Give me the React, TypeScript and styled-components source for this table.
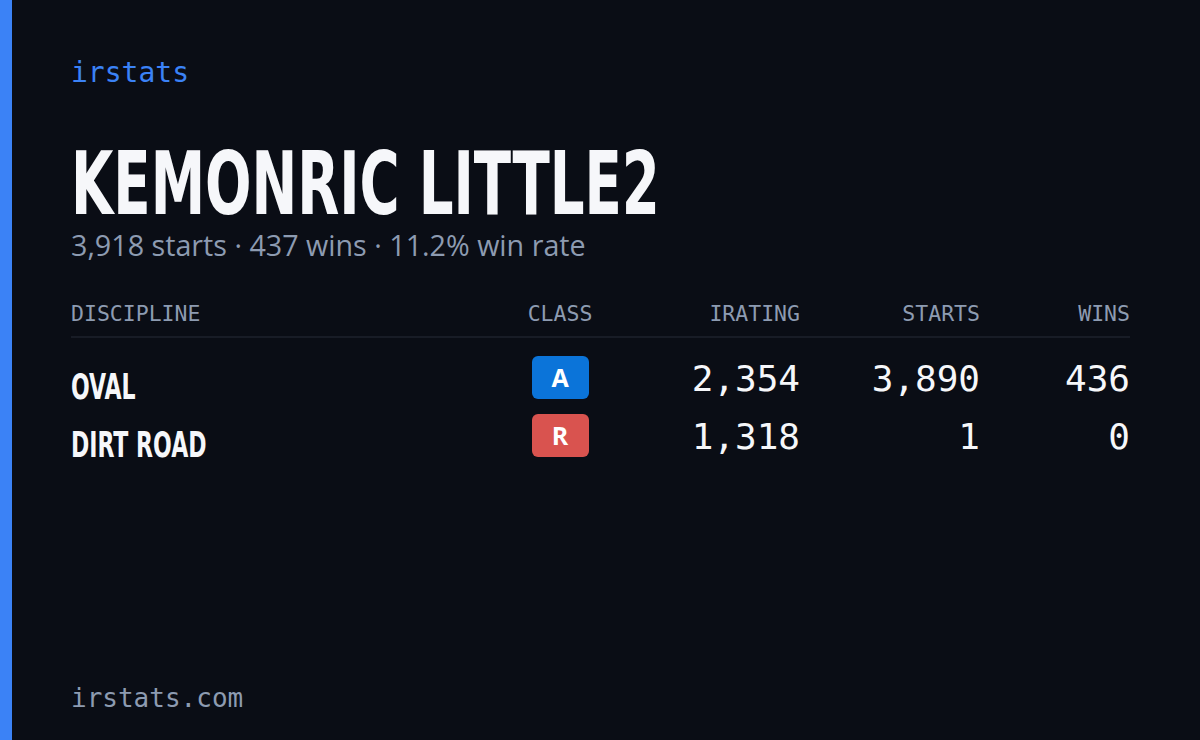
import React from 'react';
import styled, { createGlobalStyle } from 'styled-components';

const GlobalStyle = createGlobalStyle`
  html, body {
    margin: 0;
    padding: 0;
    background: #0a0d15;
  }
  #root {
    width: 1200px;
    height: 740px;
  }
`;

const MONO = `'DejaVu Sans Mono', 'Liberation Mono', monospace`;
const COND = `'DejaVu Sans Condensed', 'DejaVu Sans', sans-serif`;

const Card = styled.div`
  display: flex;
  width: 1200px;
  height: 740px;
  background: #0a0d15;
  overflow: hidden;
`;

const AccentBar = styled.div`
  width: 12px;
  flex-shrink: 0;
  background: #3b82f6;
`;

const Main = styled.div`
  flex: 1;
  display: flex;
  flex-direction: column;
  padding: 57px 70px 26px 59px;
`;

const Brand = styled.div`
  font-family: ${MONO};
  font-size: 28px;
  line-height: 32px;
  color: #3b82f6;
`;

const Title = styled.h1`
  margin: 55px 0 0;
  font-family: ${COND};
  font-weight: 700;
  font-size: 88px;
  line-height: 80px;
  color: #f6f7fa;
  white-space: nowrap;
  transform: scaleX(0.69);
  transform-origin: left center;
`;

const Subtitle = styled.div`
  margin-top: 4px;
  font-family: 'Open Sans', 'Noto Sans', sans-serif;
  font-size: 28.7px;
  line-height: 34px;
  color: #8d9bb1;
`;

const Table = styled.div`
  margin-top: 39px;
  display: grid;
  grid-template-columns: 1fr 120px 180px 180px 150px;
`;

const HeadCell = styled.div<{ $align?: string }>`
  font-family: ${MONO};
  font-size: 21.5px;
  line-height: 26px;
  color: #8d9bb1;
  text-align: ${p => p.$align || 'right'};
  padding-bottom: 9px;
  margin-bottom: 10px;
  border-bottom: 2px solid #181c26;
`;

const Discipline = styled.div`
  font-family: ${COND};
  font-weight: 700;
  font-size: 35px;
  line-height: 78px;
  margin-bottom: -20px;
  color: #f6f7fa;
  white-space: nowrap;
  transform: scaleX(0.7);
  transform-origin: left center;
`;

const ClassCell = styled.div`
  display: flex;
  align-items: center;
  justify-content: center;
`;

const Badge = styled.div<{ $bg: string }>`
  width: 57px;
  height: 43px;
  border-radius: 6px;
  background: ${p => p.$bg};
  color: #fff;
  display: flex;
  align-items: center;
  justify-content: center;
  font-family: 'Open Sans', 'Noto Sans', sans-serif;
  font-weight: 700;
  font-size: 25px;
`;

const Num = styled.div`
  font-family: ${MONO};
  font-size: 36px;
  line-height: 62px;
  margin-bottom: -4px;
  color: #f6f7fa;
  text-align: right;
`;

const Spacer = styled.div`
  flex: 1;
`;

const Footer = styled.div`
  font-family: ${MONO};
  font-size: 26px;
  line-height: 32px;
  color: #8d9bb1;
`;

const rows = [
  { name: 'OVAL', cls: 'A', color: '#0b74d9', irating: '2,354', starts: '3,890', wins: '436' },
  { name: 'DIRT ROAD', cls: 'R', color: '#d9534f', irating: '1,318', starts: '1', wins: '0' },
];

const App: React.FC = () => (
  <>
    <GlobalStyle />
    <Card>
      <AccentBar />
      <Main>
        <Brand>irstats</Brand>
        <Title>KEMONRIC LITTLE2</Title>
        <Subtitle>3,918 starts · 437 wins · 11.2% win rate</Subtitle>
        <Table>
          <HeadCell $align="left">DISCIPLINE</HeadCell>
          <HeadCell $align="center">CLASS</HeadCell>
          <HeadCell>IRATING</HeadCell>
          <HeadCell>STARTS</HeadCell>
          <HeadCell>WINS</HeadCell>
          {rows.map(r => (
            <React.Fragment key={r.name}>
              <Discipline>{r.name}</Discipline>
              <ClassCell><Badge $bg={r.color}>{r.cls}</Badge></ClassCell>
              <Num>{r.irating}</Num>
              <Num>{r.starts}</Num>
              <Num>{r.wins}</Num>
            </React.Fragment>
          ))}
        </Table>
        <Spacer />
        <Footer>irstats.com</Footer>
      </Main>
    </Card>
  </>
);

export default App;
